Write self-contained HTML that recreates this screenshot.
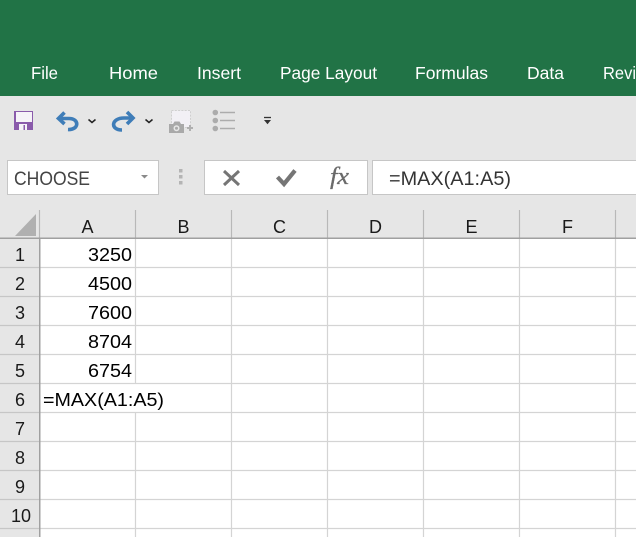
<!DOCTYPE html>
<html><head><meta charset="utf-8"><style>
html,body{margin:0;padding:0;background:#fff;overflow:hidden}
svg{display:block}
text{font-family:"Liberation Sans",sans-serif}
.tab{fill:#fff;font-size:17.5px}
.h{font-size:18px;fill:#1a1a1a;text-anchor:middle}
.c{font-size:18.5px;fill:#000}
</style></head><body>
<svg width="636" height="537" viewBox="0 0 636 537" xmlns="http://www.w3.org/2000/svg">
<rect width="636" height="537" fill="#fff"/>
<rect width="636" height="96" fill="#217346"/>
<rect y="96" width="636" height="142" fill="#e6e6e6"/>
<rect y="238" width="39" height="299" fill="#e6e6e6"/>

<text class="tab" x="31" y="79" textLength="27" lengthAdjust="spacingAndGlyphs">File</text>
<text class="tab" x="109" y="79" textLength="49" lengthAdjust="spacingAndGlyphs">Home</text>
<text class="tab" x="197" y="79" textLength="44" lengthAdjust="spacingAndGlyphs">Insert</text>
<text class="tab" x="280" y="79" textLength="97" lengthAdjust="spacingAndGlyphs">Page Layout</text>
<text class="tab" x="415" y="79" textLength="73" lengthAdjust="spacingAndGlyphs">Formulas</text>
<text class="tab" x="527" y="79" textLength="37" lengthAdjust="spacingAndGlyphs">Data</text>
<text class="tab" x="603" y="79" textLength="33" lengthAdjust="spacingAndGlyphs">Revi</text>

<!-- save -->
<path d="M14 111h19v19H14z" fill="#8a5bab"/>
<rect x="16" y="112" width="16" height="10" fill="#f6f3f8"/>
<rect x="19" y="124" width="8" height="6" fill="#f6f3f8"/>
<rect x="23.500" y="125" width="1.500" height="5" fill="#8a5bab"/>
<!-- undo -->
<path d="M59 118.500H69C79.500 118.500 79.500 130 68 129.500" fill="none" stroke="#3f7db8" stroke-width="3.600"/>
<path d="M64.500 112.500L58.500 118.500L64.500 124" fill="none" stroke="#3f7db8" stroke-width="3.600"/>
<path d="M88.500 119.500l3.500 3 3.500-3" fill="none" stroke="#222" stroke-width="1.500"/>
<!-- redo -->
<path d="M132 118H124C111 118 110 130 122 130" fill="none" stroke="#3f7db8" stroke-width="3.600"/>
<path d="M127 112L133 118L127 124" fill="none" stroke="#3f7db8" stroke-width="3.600"/>
<path d="M145.500 119.500l3.500 3 3.500-3" fill="none" stroke="#222" stroke-width="1.500"/>
<!-- camera -->
<rect x="171.500" y="110.500" width="19" height="17" fill="#f2f0f5" stroke="#cfcfcf" stroke-dasharray="2 1.300"/>
<path d="M169 124h4l1.500-2.500h5l1.500 2.500h3v9h-15z" fill="#a9a9a9"/>
<circle cx="176.500" cy="128.300" r="3" fill="#e6e6e6"/>
<circle cx="176.500" cy="128.300" r="1.500" fill="#a9a9a9"/>
<path d="M187 128h6M190 125v6" stroke="#b0b0b0" stroke-width="2"/>
<!-- list -->
<g fill="#acacac"><circle cx="215.300" cy="112.500" r="2.800"/><circle cx="215.300" cy="120.500" r="2.800"/><circle cx="215.300" cy="128.500" r="2.800"/></g>
<path d="M220 112.500h15M220 120.500h15M220 128.500h15" stroke="#acacac" stroke-width="1.500"/>
<!-- customize -->
<path d="M264 117.500h7" stroke="#333" stroke-width="1.300"/>
<path d="M264 120h7l-3.500 4.200z" fill="#333"/>

<!-- name box -->
<rect x="7.500" y="160.500" width="151" height="34" fill="#fff" stroke="#c6c6c6"/>
<text x="14" y="185" font-size="19.500" fill="#444" textLength="76" lengthAdjust="spacingAndGlyphs">CHOOSE</text>
<path d="M141 175h7l-3.500 3.500z" fill="#8a8a8a"/>
<g fill="#b4b4b4"><rect x="179" y="169" width="3.500" height="3.500"/><rect x="179" y="175" width="3.500" height="3.500"/><rect x="179" y="181" width="3.500" height="3.500"/></g>

<!-- fx box -->
<rect x="204.500" y="160.500" width="163" height="34" fill="#fff" stroke="#c6c6c6"/>
<path d="M224 171L239 185M239 171L224 185" stroke="#757575" stroke-width="3" fill="none"/>
<path d="M277.500 177L284 184L295 170.500" stroke="#757575" stroke-width="4.200" fill="none"/>
<text x="330" y="184" font-size="24" font-style="italic" fill="#6a6a6a" stroke="#6a6a6a" stroke-width="0.300" style="font-family:'Liberation Serif',serif" textLength="19" lengthAdjust="spacingAndGlyphs">fx</text>

<!-- formula box -->
<rect x="372.500" y="160.500" width="270" height="34" fill="#fff" stroke="#c6c6c6"/>
<text x="389" y="185" font-size="19.500" fill="#333" textLength="122" lengthAdjust="spacingAndGlyphs">=MAX(A1:A5)</text>

<!-- corner -->
<path d="M15 236L36 214V236Z" fill="#b0b0b0"/>

<!-- grid -->
<g stroke="#d4d4d4" stroke-width="1.200" fill="none">
<path d="M40 267.500H636M40 296.500H636M40 325.500H636M40 354.500H636M40 383.500H636M40 412.500H636M40 441.500H636M40 470.500H636M40 499.500H636M40 528.500H636"/>
<path d="M135.500 238V383M135.500 412V537M231.500 238V537M327.500 238V537M423.500 238V537M519.500 238V537M615.500 238V537"/>
</g>
<g stroke="#c6c6c6" stroke-width="1.200" fill="none">
<path d="M0 267.500H39M0 296.500H39M0 325.500H39M0 354.500H39M0 383.500H39M0 412.500H39M0 441.500H39M0 470.500H39M0 499.500H39M0 528.500H39"/>
</g>
<g stroke="#b8b8b8" stroke-width="1.200" fill="none">
<path d="M39.500 210V238M135.500 210V238M231.500 210V238M327.500 210V238M423.500 210V238M519.500 210V238M615.500 210V238"/>
</g>
<rect x="0" y="237.500" width="636" height="1.500" fill="#a0a0a0"/>
<rect x="39" y="237.500" width="1.500" height="300" fill="#a0a0a0"/>

<!-- col headers -->
<text class="h" x="87.500" y="233">A</text>
<text class="h" x="183.500" y="233">B</text>
<text class="h" x="279.500" y="233">C</text>
<text class="h" x="375.500" y="233">D</text>
<text class="h" x="471.500" y="233">E</text>
<text class="h" x="567.500" y="233">F</text>

<!-- row headers -->
<text class="h" x="20" y="261">1</text>
<text class="h" x="20" y="290">2</text>
<text class="h" x="20" y="319">3</text>
<text class="h" x="20" y="348">4</text>
<text class="h" x="20" y="377">5</text>
<text class="h" x="20" y="406">6</text>
<text class="h" x="20" y="435">7</text>
<text class="h" x="20" y="464">8</text>
<text class="h" x="20" y="493">9</text>
<text class="h" x="21" y="522">10</text>

<!-- cells -->
<text class="c" x="88" y="261" textLength="44" lengthAdjust="spacingAndGlyphs">3250</text>
<text class="c" x="88" y="290" textLength="44" lengthAdjust="spacingAndGlyphs">4500</text>
<text class="c" x="88" y="319" textLength="44" lengthAdjust="spacingAndGlyphs">7600</text>
<text class="c" x="88" y="348" textLength="44" lengthAdjust="spacingAndGlyphs">8704</text>
<text class="c" x="88" y="377" textLength="44" lengthAdjust="spacingAndGlyphs">6754</text>
<text class="c" x="43" y="406" textLength="121" lengthAdjust="spacingAndGlyphs">=MAX(A1:A5)</text>
</svg>
</body></html>
